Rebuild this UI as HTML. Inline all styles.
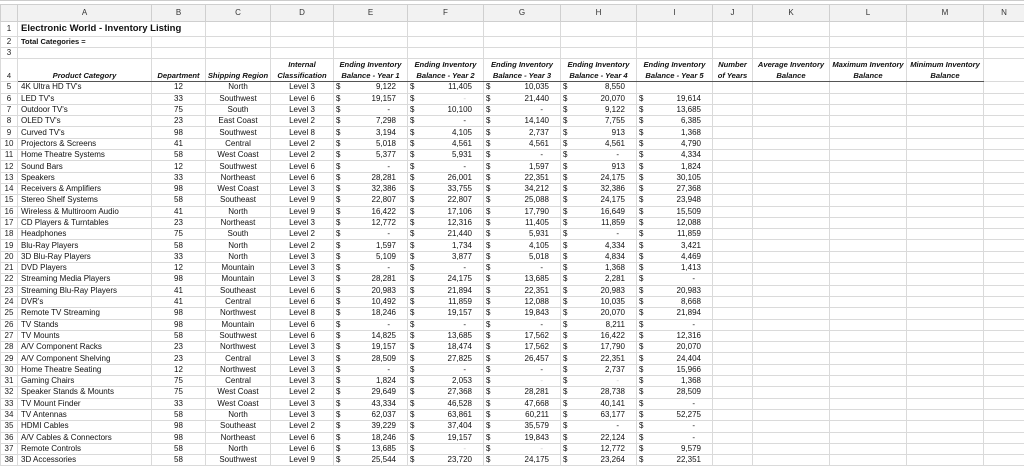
<!DOCTYPE html>
<html><head><meta charset="utf-8">
<style>
html,body{margin:0;padding:0;background:#fff;width:1024px;height:468px;overflow:hidden}
body{padding-top:3px;border-top:1px solid #ccc;box-sizing:border-box;font-family:"Liberation Sans",sans-serif;font-size:8px;color:#111}
table{border-collapse:collapse;table-layout:fixed;width:1024px}
td{border:1px solid #dadada;padding:0;white-space:nowrap;overflow:hidden;line-height:10px;height:10.3px}
tr.h td{background:#f2f2f2;text-align:center;height:16px;font-size:8px;color:#333;border-color:#cfcfcf}
td.n{text-align:center;color:#222;background:#fff}
td.a{padding-left:3px}
td.c{text-align:center}
td.m{text-align:right;padding-right:11px}
td.m i{float:left;font-style:normal;margin-left:2px}
td.m b{font-weight:normal;padding-right:6px}
td.m b.l{color:#c8c8c8}
tr.r1 td{height:14px}
tr.r1 td.t{font-weight:bold;font-size:9.5px;padding-left:3px}
tr.r2 td.t{font-weight:bold;font-size:7.5px;padding-left:3px}
tr.r3 td{height:9px}
tr.r4 td{height:22px;vertical-align:bottom;font-weight:bold;font-style:italic;text-align:center;font-size:7.6px;line-height:11px;border-bottom:1px solid #555}
tr.r4 td.n{font-weight:normal;font-style:normal;border-bottom-color:#dadada}
tr.r4 td.x{border-bottom-color:#dadada}
</style></head><body>
<table>
<colgroup><col style="width:17px"><col style="width:134px"><col style="width:54px"><col style="width:65px"><col style="width:63px"><col style="width:74px"><col style="width:76px"><col style="width:77px"><col style="width:76px"><col style="width:76px"><col style="width:40px"><col style="width:77px"><col style="width:77px"><col style="width:77px"><col style="width:41px"></colgroup>
<tr class="h"><td></td><td>A</td><td>B</td><td>C</td><td>D</td><td>E</td><td>F</td><td>G</td><td>H</td><td>I</td><td>J</td><td>K</td><td>L</td><td>M</td><td>N</td></tr>
<tr class="r1"><td class="n">1</td><td class="t" colspan="2" style="overflow:visible">Electronic World - Inventory Listing</td><td></td><td></td><td></td><td></td><td></td><td></td><td></td><td></td><td></td><td></td><td></td><td></td></tr>
<tr class="r2"><td class="n">2</td><td class="t">Total Categories =</td><td></td><td></td><td></td><td></td><td></td><td></td><td></td><td></td><td></td><td></td><td></td><td></td><td></td></tr>
<tr class="r3"><td class="n">3</td><td></td><td></td><td></td><td></td><td></td><td></td><td></td><td></td><td></td><td></td><td></td><td></td><td></td><td></td></tr>
<tr class="r4"><td class="n">4</td><td>Product Category</td><td>Department</td><td>Shipping Region</td><td>Internal<br>Classification</td><td>Ending Inventory<br>Balance - Year 1</td><td>Ending Inventory<br>Balance - Year 2</td><td>Ending Inventory<br>Balance - Year 3</td><td>Ending Inventory<br>Balance - Year 4</td><td>Ending Inventory<br>Balance - Year 5</td><td>Number<br>of Years</td><td>Average Inventory<br>Balance</td><td>Maximum Inventory<br>Balance</td><td>Minimum Inventory<br>Balance</td><td class="x"></td></tr>
<tr><td class="n">5</td><td class="a">4K Ultra HD TV's</td><td class="c">12</td><td class="c">North</td><td class="c">Level 3</td><td class="m"><i>$</i>9,122</td><td class="m"><i>$</i>11,405</td><td class="m"><i>$</i>10,035</td><td class="m"><i>$</i>8,550</td><td></td><td></td><td></td><td></td><td></td><td></td></tr>
<tr><td class="n">6</td><td class="a">LED TV's</td><td class="c">33</td><td class="c">Southwest</td><td class="c">Level 6</td><td class="m"><i>$</i>19,157</td><td class="m"><i>$</i><b class="l">-</b></td><td class="m"><i>$</i>21,440</td><td class="m"><i>$</i>20,070</td><td class="m"><i>$</i>19,614</td><td></td><td></td><td></td><td></td><td></td></tr>
<tr><td class="n">7</td><td class="a">Outdoor TV's</td><td class="c">75</td><td class="c">South</td><td class="c">Level 3</td><td class="m"><i>$</i><b>-</b></td><td class="m"><i>$</i>10,100</td><td class="m"><i>$</i><b>-</b></td><td class="m"><i>$</i>9,122</td><td class="m"><i>$</i>13,685</td><td></td><td></td><td></td><td></td><td></td></tr>
<tr><td class="n">8</td><td class="a">OLED TV's</td><td class="c">23</td><td class="c">East Coast</td><td class="c">Level 2</td><td class="m"><i>$</i>7,298</td><td class="m"><i>$</i><b>-</b></td><td class="m"><i>$</i>14,140</td><td class="m"><i>$</i>7,755</td><td class="m"><i>$</i>6,385</td><td></td><td></td><td></td><td></td><td></td></tr>
<tr><td class="n">9</td><td class="a">Curved TV's</td><td class="c">98</td><td class="c">Southwest</td><td class="c">Level 8</td><td class="m"><i>$</i>3,194</td><td class="m"><i>$</i>4,105</td><td class="m"><i>$</i>2,737</td><td class="m"><i>$</i>913</td><td class="m"><i>$</i>1,368</td><td></td><td></td><td></td><td></td><td></td></tr>
<tr><td class="n">10</td><td class="a">Projectors &amp; Screens</td><td class="c">41</td><td class="c">Central</td><td class="c">Level 2</td><td class="m"><i>$</i>5,018</td><td class="m"><i>$</i>4,561</td><td class="m"><i>$</i>4,561</td><td class="m"><i>$</i>4,561</td><td class="m"><i>$</i>4,790</td><td></td><td></td><td></td><td></td><td></td></tr>
<tr><td class="n">11</td><td class="a">Home Theatre Systems</td><td class="c">58</td><td class="c">West Coast</td><td class="c">Level 2</td><td class="m"><i>$</i>5,377</td><td class="m"><i>$</i>5,931</td><td class="m"><i>$</i><b>-</b></td><td class="m"><i>$</i><b>-</b></td><td class="m"><i>$</i>4,334</td><td></td><td></td><td></td><td></td><td></td></tr>
<tr><td class="n">12</td><td class="a">Sound Bars</td><td class="c">12</td><td class="c">Southwest</td><td class="c">Level 6</td><td class="m"><i>$</i><b>-</b></td><td class="m"><i>$</i><b>-</b></td><td class="m"><i>$</i>1,597</td><td class="m"><i>$</i>913</td><td class="m"><i>$</i>1,824</td><td></td><td></td><td></td><td></td><td></td></tr>
<tr><td class="n">13</td><td class="a">Speakers</td><td class="c">33</td><td class="c">Northeast</td><td class="c">Level 6</td><td class="m"><i>$</i>28,281</td><td class="m"><i>$</i>26,001</td><td class="m"><i>$</i>22,351</td><td class="m"><i>$</i>24,175</td><td class="m"><i>$</i>30,105</td><td></td><td></td><td></td><td></td><td></td></tr>
<tr><td class="n">14</td><td class="a">Receivers &amp; Amplifiers</td><td class="c">98</td><td class="c">West Coast</td><td class="c">Level 3</td><td class="m"><i>$</i>32,386</td><td class="m"><i>$</i>33,755</td><td class="m"><i>$</i>34,212</td><td class="m"><i>$</i>32,386</td><td class="m"><i>$</i>27,368</td><td></td><td></td><td></td><td></td><td></td></tr>
<tr><td class="n">15</td><td class="a">Stereo Shelf Systems</td><td class="c">58</td><td class="c">Southeast</td><td class="c">Level 9</td><td class="m"><i>$</i>22,807</td><td class="m"><i>$</i>22,807</td><td class="m"><i>$</i>25,088</td><td class="m"><i>$</i>24,175</td><td class="m"><i>$</i>23,948</td><td></td><td></td><td></td><td></td><td></td></tr>
<tr><td class="n">16</td><td class="a">Wireless &amp; Multiroom Audio</td><td class="c">41</td><td class="c">North</td><td class="c">Level 9</td><td class="m"><i>$</i>16,422</td><td class="m"><i>$</i>17,106</td><td class="m"><i>$</i>17,790</td><td class="m"><i>$</i>16,649</td><td class="m"><i>$</i>15,509</td><td></td><td></td><td></td><td></td><td></td></tr>
<tr><td class="n">17</td><td class="a">CD Players &amp; Turntables</td><td class="c">23</td><td class="c">Northeast</td><td class="c">Level 3</td><td class="m"><i>$</i>12,772</td><td class="m"><i>$</i>12,316</td><td class="m"><i>$</i>11,405</td><td class="m"><i>$</i>11,859</td><td class="m"><i>$</i>12,088</td><td></td><td></td><td></td><td></td><td></td></tr>
<tr><td class="n">18</td><td class="a">Headphones</td><td class="c">75</td><td class="c">South</td><td class="c">Level 2</td><td class="m"><i>$</i><b>-</b></td><td class="m"><i>$</i>21,440</td><td class="m"><i>$</i>5,931</td><td class="m"><i>$</i><b>-</b></td><td class="m"><i>$</i>11,859</td><td></td><td></td><td></td><td></td><td></td></tr>
<tr><td class="n">19</td><td class="a">Blu-Ray Players</td><td class="c">58</td><td class="c">North</td><td class="c">Level 2</td><td class="m"><i>$</i>1,597</td><td class="m"><i>$</i>1,734</td><td class="m"><i>$</i>4,105</td><td class="m"><i>$</i>4,334</td><td class="m"><i>$</i>3,421</td><td></td><td></td><td></td><td></td><td></td></tr>
<tr><td class="n">20</td><td class="a">3D Blu-Ray Players</td><td class="c">33</td><td class="c">North</td><td class="c">Level 3</td><td class="m"><i>$</i>5,109</td><td class="m"><i>$</i>3,877</td><td class="m"><i>$</i>5,018</td><td class="m"><i>$</i>4,834</td><td class="m"><i>$</i>4,469</td><td></td><td></td><td></td><td></td><td></td></tr>
<tr><td class="n">21</td><td class="a">DVD Players</td><td class="c">12</td><td class="c">Mountain</td><td class="c">Level 3</td><td class="m"><i>$</i><b>-</b></td><td class="m"><i>$</i><b>-</b></td><td class="m"><i>$</i><b>-</b></td><td class="m"><i>$</i>1,368</td><td class="m"><i>$</i>1,413</td><td></td><td></td><td></td><td></td><td></td></tr>
<tr><td class="n">22</td><td class="a">Streaming Media Players</td><td class="c">98</td><td class="c">Mountain</td><td class="c">Level 3</td><td class="m"><i>$</i>28,281</td><td class="m"><i>$</i>24,175</td><td class="m"><i>$</i>13,685</td><td class="m"><i>$</i>2,281</td><td class="m"><i>$</i><b>-</b></td><td></td><td></td><td></td><td></td><td></td></tr>
<tr><td class="n">23</td><td class="a">Streaming Blu-Ray Players</td><td class="c">41</td><td class="c">Southeast</td><td class="c">Level 6</td><td class="m"><i>$</i>20,983</td><td class="m"><i>$</i>21,894</td><td class="m"><i>$</i>22,351</td><td class="m"><i>$</i>20,983</td><td class="m"><i>$</i>20,983</td><td></td><td></td><td></td><td></td><td></td></tr>
<tr><td class="n">24</td><td class="a">DVR's</td><td class="c">41</td><td class="c">Central</td><td class="c">Level 6</td><td class="m"><i>$</i>10,492</td><td class="m"><i>$</i>11,859</td><td class="m"><i>$</i>12,088</td><td class="m"><i>$</i>10,035</td><td class="m"><i>$</i>8,668</td><td></td><td></td><td></td><td></td><td></td></tr>
<tr><td class="n">25</td><td class="a">Remote TV Streaming</td><td class="c">98</td><td class="c">Northwest</td><td class="c">Level 8</td><td class="m"><i>$</i>18,246</td><td class="m"><i>$</i>19,157</td><td class="m"><i>$</i>19,843</td><td class="m"><i>$</i>20,070</td><td class="m"><i>$</i>21,894</td><td></td><td></td><td></td><td></td><td></td></tr>
<tr><td class="n">26</td><td class="a">TV Stands</td><td class="c">98</td><td class="c">Mountain</td><td class="c">Level 6</td><td class="m"><i>$</i><b>-</b></td><td class="m"><i>$</i><b>-</b></td><td class="m"><i>$</i><b>-</b></td><td class="m"><i>$</i>8,211</td><td class="m"><i>$</i><b>-</b></td><td></td><td></td><td></td><td></td><td></td></tr>
<tr><td class="n">27</td><td class="a">TV Mounts</td><td class="c">58</td><td class="c">Southwest</td><td class="c">Level 6</td><td class="m"><i>$</i>14,825</td><td class="m"><i>$</i>13,685</td><td class="m"><i>$</i>17,562</td><td class="m"><i>$</i>16,422</td><td class="m"><i>$</i>12,316</td><td></td><td></td><td></td><td></td><td></td></tr>
<tr><td class="n">28</td><td class="a">A/V Component Racks</td><td class="c">23</td><td class="c">Northwest</td><td class="c">Level 3</td><td class="m"><i>$</i>19,157</td><td class="m"><i>$</i>18,474</td><td class="m"><i>$</i>17,562</td><td class="m"><i>$</i>17,790</td><td class="m"><i>$</i>20,070</td><td></td><td></td><td></td><td></td><td></td></tr>
<tr><td class="n">29</td><td class="a">A/V Component Shelving</td><td class="c">23</td><td class="c">Central</td><td class="c">Level 3</td><td class="m"><i>$</i>28,509</td><td class="m"><i>$</i>27,825</td><td class="m"><i>$</i>26,457</td><td class="m"><i>$</i>22,351</td><td class="m"><i>$</i>24,404</td><td></td><td></td><td></td><td></td><td></td></tr>
<tr><td class="n">30</td><td class="a">Home Theatre Seating</td><td class="c">12</td><td class="c">Northwest</td><td class="c">Level 3</td><td class="m"><i>$</i><b>-</b></td><td class="m"><i>$</i><b>-</b></td><td class="m"><i>$</i><b>-</b></td><td class="m"><i>$</i>2,737</td><td class="m"><i>$</i>15,966</td><td></td><td></td><td></td><td></td><td></td></tr>
<tr><td class="n">31</td><td class="a">Gaming Chairs</td><td class="c">75</td><td class="c">Central</td><td class="c">Level 3</td><td class="m"><i>$</i>1,824</td><td class="m"><i>$</i>2,053</td><td class="m"><i>$</i><b class="l">-</b></td><td class="m"><i>$</i><b class="l">-</b></td><td class="m"><i>$</i>1,368</td><td></td><td></td><td></td><td></td><td></td></tr>
<tr><td class="n">32</td><td class="a">Speaker Stands &amp; Mounts</td><td class="c">75</td><td class="c">West Coast</td><td class="c">Level 2</td><td class="m"><i>$</i>29,649</td><td class="m"><i>$</i>27,368</td><td class="m"><i>$</i>28,281</td><td class="m"><i>$</i>28,738</td><td class="m"><i>$</i>28,509</td><td></td><td></td><td></td><td></td><td></td></tr>
<tr><td class="n">33</td><td class="a">TV Mount Finder</td><td class="c">33</td><td class="c">West Coast</td><td class="c">Level 3</td><td class="m"><i>$</i>43,334</td><td class="m"><i>$</i>46,528</td><td class="m"><i>$</i>47,668</td><td class="m"><i>$</i>40,141</td><td class="m"><i>$</i><b>-</b></td><td></td><td></td><td></td><td></td><td></td></tr>
<tr><td class="n">34</td><td class="a">TV Antennas</td><td class="c">58</td><td class="c">North</td><td class="c">Level 3</td><td class="m"><i>$</i>62,037</td><td class="m"><i>$</i>63,861</td><td class="m"><i>$</i>60,211</td><td class="m"><i>$</i>63,177</td><td class="m"><i>$</i>52,275</td><td></td><td></td><td></td><td></td><td></td></tr>
<tr><td class="n">35</td><td class="a">HDMI Cables</td><td class="c">98</td><td class="c">Southeast</td><td class="c">Level 2</td><td class="m"><i>$</i>39,229</td><td class="m"><i>$</i>37,404</td><td class="m"><i>$</i>35,579</td><td class="m"><i>$</i><b>-</b></td><td class="m"><i>$</i><b>-</b></td><td></td><td></td><td></td><td></td><td></td></tr>
<tr><td class="n">36</td><td class="a">A/V Cables &amp; Connectors</td><td class="c">98</td><td class="c">Northeast</td><td class="c">Level 6</td><td class="m"><i>$</i>18,246</td><td class="m"><i>$</i>19,157</td><td class="m"><i>$</i>19,843</td><td class="m"><i>$</i>22,124</td><td class="m"><i>$</i><b>-</b></td><td></td><td></td><td></td><td></td><td></td></tr>
<tr><td class="n">37</td><td class="a">Remote Controls</td><td class="c">58</td><td class="c">North</td><td class="c">Level 6</td><td class="m"><i>$</i>13,685</td><td class="m"><i>$</i><b class="l">-</b></td><td class="m"><i>$</i><b class="l">-</b></td><td class="m"><i>$</i>12,772</td><td class="m"><i>$</i>9,579</td><td></td><td></td><td></td><td></td><td></td></tr>
<tr><td class="n">38</td><td class="a">3D Accessories</td><td class="c">58</td><td class="c">Southwest</td><td class="c">Level 9</td><td class="m"><i>$</i>25,544</td><td class="m"><i>$</i>23,720</td><td class="m"><i>$</i>24,175</td><td class="m"><i>$</i>23,264</td><td class="m"><i>$</i>22,351</td><td></td><td></td><td></td><td></td><td></td></tr>
</table>
</body></html>
